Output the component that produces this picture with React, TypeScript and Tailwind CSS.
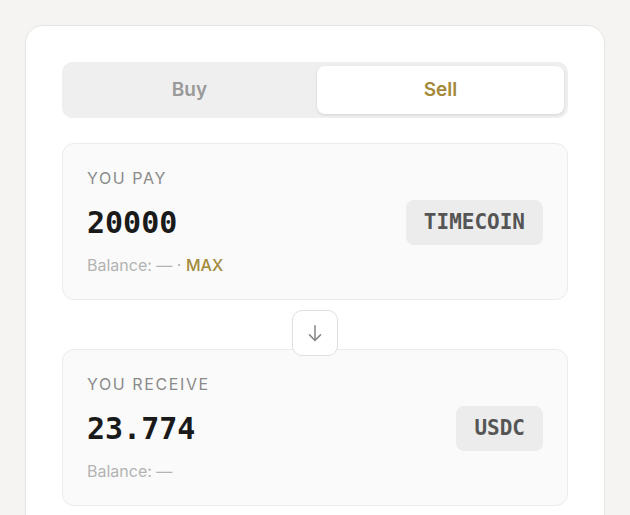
import { useState } from 'react'

const sans = { fontFamily: 'Inter, "Noto Sans", sans-serif' }

function Pane({
  label,
  amount,
  token,
  showMax,
}: {
  label: string
  amount: string
  token: string
  showMax?: boolean
}) {
  return (
    <div className="rounded-xl border border-[#ebebea] bg-[#fafafa] p-6">
      <div className="text-[16px] leading-5 tracking-[0.1em] text-[#8a8a8a]">{label}</div>
      <div className="mt-3 flex items-center justify-between">
        <div className="font-['DejaVu_Sans_Mono',monospace] text-[30px] font-bold leading-none text-[#1a1a1a]">
          {amount}
        </div>
        <div className="flex h-[45px] items-center rounded-lg bg-[#ececec] px-[18px] font-['DejaVu_Sans_Mono',monospace] text-[21px] font-bold text-[#555555]">
          {token}
        </div>
      </div>
      <div className="mt-[10px] text-[16px] leading-5 text-[#b3b3b3]">
        Balance: —
        {showMax && (
          <>
            {' · '}
            <button className="font-medium text-[#a38a3a]">MAX</button>
          </>
        )}
      </div>
    </div>
  )
}

export default function App() {
  const [mode, setMode] = useState<'buy' | 'sell'>('sell')

  return (
    <div className="min-h-screen bg-[#f5f4f2] px-[25px] pt-[25px]" style={sans}>
      <div className="min-h-[520px] rounded-[18px] border border-[#e6e4e0] bg-white px-9 pt-9">
        <div className="flex gap-1 rounded-[10px] bg-[#efefef] p-1">
          {(['buy', 'sell'] as const).map((m) => (
            <button
              key={m}
              onClick={() => setMode(m)}
              className={`h-12 flex-1 rounded-lg text-[19px] font-semibold ${
                mode === m
                  ? 'bg-white text-[#a38a3a] shadow-[0_1px_3px_rgba(0,0,0,0.12)]'
                  : 'text-[#999999]'
              }`}
            >
              {m === 'buy' ? 'Buy' : 'Sell'}
            </button>
          ))}
        </div>

        <div className="mt-[25px]">
          <Pane label="YOU PAY" amount="20000" token="TIMECOIN" showMax />
        </div>

        <div className="relative z-10 mb-[-7px] mt-[10px] flex justify-center">
          <button className="flex h-[46px] w-[46px] items-center justify-center rounded-[10px] border border-[#e0e0e0] bg-white text-[#8a8a8a]">
            <svg width="22" height="22" viewBox="0 0 24 24" fill="none" stroke="currentColor" strokeWidth="1.7" strokeLinecap="round" strokeLinejoin="round">
              <path d="M12 4v16" />
              <path d="M6 14l6 6 6-6" />
            </svg>
          </button>
        </div>

        <Pane label="YOU RECEIVE" amount="23.774" token="USDC" />
      </div>
    </div>
  )
}
